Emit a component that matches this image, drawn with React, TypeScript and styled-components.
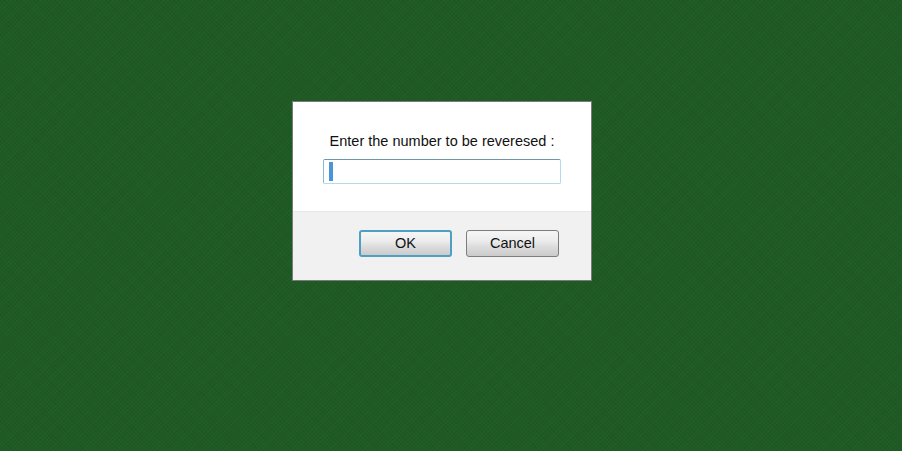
import React from "react";
import styled, { createGlobalStyle } from "styled-components";

const Global = createGlobalStyle`
  html, body { margin: 0; padding: 0; height: 100%; }
  #root { height: 100%; }
  body { font-family: "Liberation Sans", Arial, sans-serif; }
`;

const Page = styled.div`
  width: 902px;
  height: 451px;
  overflow: hidden;
  box-sizing: border-box;
  padding: 101px 0 0 292px;
  display: flex;
  justify-content: flex-start;
  align-items: flex-start;
  background-color: #1f5a24;
  background-image:
    repeating-linear-gradient(45deg, rgba(0, 0, 0, 0.04) 0 1px, transparent 1px 3px),
    repeating-linear-gradient(-45deg, rgba(255, 255, 255, 0.015) 0 1px, transparent 1px 3px);
`;

const Dialog = styled.div`
  width: 300px;
  height: 180px;
  box-sizing: border-box;
  border: 1px solid #7a7a7a;
  background: #ffffff;
  display: flex;
  flex-direction: column;
`;

const Body = styled.div`
  height: 109px;
  box-sizing: border-box;
  padding-top: 31px;
  display: flex;
  flex-direction: column;
  align-items: center;
`;

const Message = styled.div`
  font-size: 14.5px;
  line-height: 17px;
  color: #111;
  margin-bottom: 9px;
`;

const Field = styled.div`
  width: 238px;
  height: 25px;
  box-sizing: border-box;
  border: 1px solid #b5dbea;
  border-top-color: #6f97a8;
  border-left-color: #8fb8c8;
  border-radius: 2px;
  background: #fff;
  padding: 2px 5px;
  display: flex;
`;

const Caret = styled.span`
  width: 4px;
  height: 19px;
  background: #4a94d8;
`;

const Footer = styled.div`
  flex: 1;
  background: #f2f1f1;
  border-top: 1px solid #e8e8e8;
  box-sizing: border-box;
  padding: 18px 32px 0 66px;
  display: flex;
  justify-content: space-between;
  align-items: flex-start;
`;

const Button = styled.button<{ $focused?: boolean }>`
  height: 27px;
  width: 93px;
  box-sizing: border-box;
  padding: 0 0 2px;
  font-family: "Liberation Sans", Arial, sans-serif;
  font-size: 14.5px;
  color: #111;
  border-radius: 3px;
  border: ${(p) => (p.$focused ? "2px solid #4f9fc4" : "1px solid #7d7d7d")};
  background: linear-gradient(to bottom, #f6f6f6 0%, #ececec 40%, #dedede 60%, #cbcbcb 100%);
`;

export default function App() {
  return (
    <>
      <Global />
      <Page>
        <Dialog>
          <Body>
            <Message>Enter the number to be reveresed :</Message>
            <Field>
              <Caret />
            </Field>
          </Body>
          <Footer>
            <Button $focused>OK</Button>
            <Button>Cancel</Button>
          </Footer>
        </Dialog>
      </Page>
    </>
  );
}
